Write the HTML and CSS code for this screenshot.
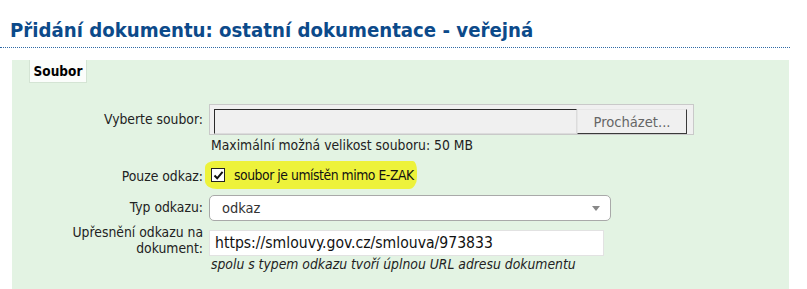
FILE: index.html
```html
<!DOCTYPE html>
<html lang="cs">
<head>
<meta charset="utf-8">
<title>Přidání dokumentu</title>
<link rel="stylesheet" href="styles.css">
</head>
<body>
<h1 class="title">Přidání dokumentu: ostatní dokumentace - veřejná</h1>
<div class="panel">
  <div class="tab">Soubor</div>
  <div class="form">
    <div class="label lbl-file">Vyberte soubor:</div>
    <div class="field">
      <div class="file">
        <div class="file-text"></div>
        <div class="file-btn">Procházet...</div>
      </div>
      <div class="hint">Maximální možná velikost souboru: 50 MB</div>
    </div>

    <div class="label lbl-check">Pouze odkaz:</div>
    <div class="field">
      <span class="highlight">
        <span class="checkbox">
          <svg width="11" height="11" viewBox="0 0 11 11"><path d="M1.5 5.5 L4.2 8.3 L9.6 1.8" fill="none" stroke="#111" stroke-width="2"/></svg>
        </span>
        <span class="check-text">soubor je umístěn mimo E-ZAK</span>
      </span>
    </div>

    <div class="label lbl-select">Typ odkazu:</div>
    <div class="field">
      <div class="select">
        <span>odkaz</span>
        <svg class="arrow" width="8" height="5" viewBox="0 0 8 5"><path d="M0 0 H8 L4 5 Z" fill="#888"/></svg>
      </div>
    </div>

    <div class="label lbl-url">Upřesnění odkazu na dokument:</div>
    <div class="field">
      <div class="url">https://smlouvy.gov.cz/smlouva/973833</div>
      <div class="hint italic">spolu s typem odkazu tvoří úplnou URL adresu dokumentu</div>
    </div>
  </div>
</div>
</body>
</html>
```
FILE: styles.css
```css
html, body {
  margin: 0;
  padding: 0;
  background: #ffffff;
}
body {
  font-family: "DejaVu Sans Condensed", "DejaVu Sans", sans-serif;
  font-size: 13.8px;
  color: #111;
  width: 807px;
  height: 289px;
  overflow: hidden;
}
.title {
  margin: 0;
  width: 780px;
  padding: 18px 0 5px 10px;
  font-size: 20.2px;
  line-height: 24px;
  font-weight: bold;
  color: #0c4a8a;
  border-bottom: 1px dotted #2f6aa6;
}
.panel {
  margin: 12px 0 0 12px;
  width: 777px;
  height: 240px;
  background: #e3f3e3;
}
.tab {
  margin-left: 17px;
  width: 56px;
  height: 22px;
  line-height: 22px;
  text-align: center;
  font-weight: bold;
  font-size: 13.5px;
  background: #fbfdfb;
  border: 1px solid #d4e4d4;
  border-top: none;
  color: #000;
}
.form {
  display: grid;
  grid-template-columns: 191px 1fr;
  column-gap: 6px;
  margin-top: 21px;
}
.label {
  text-align: right;
  color: #222;
  padding-left: 46px;
}
.lbl-file { padding-top: 7px; }
.lbl-check { padding-top: 14px; }
.lbl-select { padding-top: 10px; }
.lbl-url { padding-top: 3px; line-height: 16px; }
.field {
  display: flex;
  flex-direction: column;
  align-items: flex-start;
}
.file {
  background: #f0f0f0;
  border: 1px solid #c9c9c9;
  display: flex;
  align-items: flex-start;
  padding: 3px 0 0 4px;
  box-sizing: border-box;
  width: 485px;
  height: 31px;
}
.file-text {
  width: 361px;
  height: 23px;
  border-top: 1px solid #2a2a2a;
  border-left: 1px solid #2a2a2a;
  border-right: 1px solid #dcdcdc;
  border-bottom: 1px solid #dcdcdc;
  background: #f0f0f0;
  margin-top: 1px;
}
.file-btn {
  width: 108px;
  height: 23px;
  line-height: 23px;
  text-align: center;
  margin-top: 1px;
  background: #f0f0f0;
  color: #666;
  font-size: 14.6px;
  border-top: 1px solid #e6e6e6;
  border-left: 1px solid #e6e6e6;
  border-right: 1px solid #3a3a3a;
  border-bottom: 1px solid #3a3a3a;
}
.hint {
  margin: 2px 0 0 2px;
  line-height: 17px;
  color: #222;
}
.italic {
  font-style: italic;
  margin-top: 0;
}
.highlight {
  display: inline-flex;
  align-items: center;
  margin-top: 7px;
  height: 28px;
  padding: 0 3px 0 6px;
  margin-left: -4px;
  background: #edf23b;
  border-radius: 10px 4px 8px 12px / 6px 10px 12px 8px;
}
.checkbox {
  width: 12px;
  height: 12px;
  border: 1px solid #222;
  background: #fff;
  display: inline-flex;
  align-items: center;
  justify-content: center;
  margin: 0 9px 0 0;
}
.check-text {
  color: #111;
  font-size: 13.8px;
  letter-spacing: -0.45px;
}
.select {
  margin-top: 6px;
  width: 402px;
  height: 26px;
  box-sizing: border-box;
  border: 1px solid #a9a9a9;
  border-radius: 5px;
  background: #fff;
  display: flex;
  align-items: center;
  justify-content: space-between;
  padding: 0 10px 0 12px;
  color: #333;
  font-size: 14.5px;
}
.arrow {
  margin-top: 1px;
}
.url {
  margin-top: 9px;
  width: 395px;
  height: 26px;
  box-sizing: border-box;
  border: 1px solid #e2e2e2;
  background: #fff;
  line-height: 24px;
  padding-left: 5px;
  color: #111;
  font-size: 15.6px;
}
```
